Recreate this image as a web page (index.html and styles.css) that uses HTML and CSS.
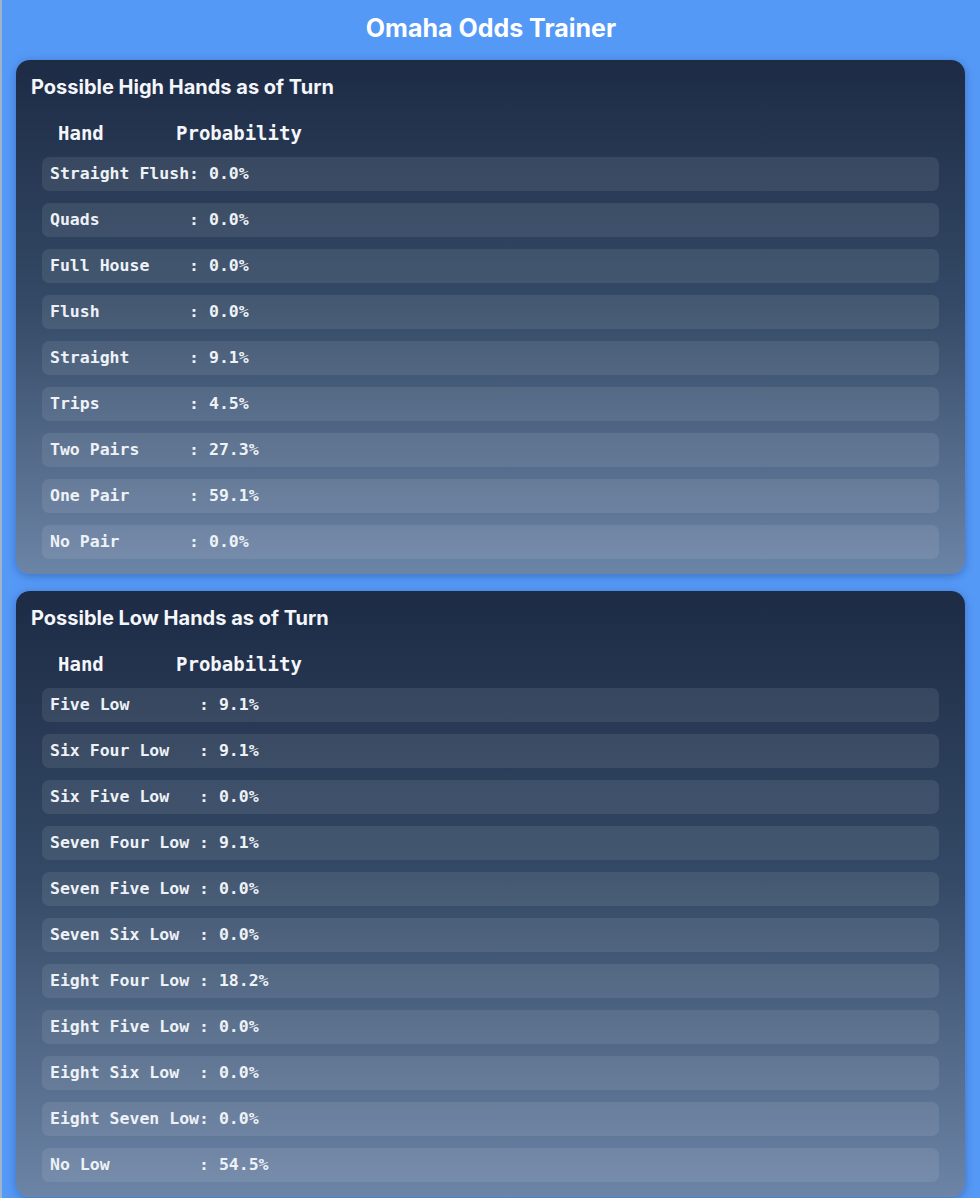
FILE: index.html
```html
<!DOCTYPE html>
<html>
<head>
<meta charset="utf-8">
<link rel="stylesheet" href="styles.css">
</head>
<body>
<h1 class="app-title">Omaha Odds Trainer</h1>

<section class="card">
  <h2 class="card-title">Possible High Hands as of Turn</h2>
  <div class="list">
    <div class="list-head"><span class="col-hand">Hand</span><span class="col-prob">Probability</span></div>
    <div class="row">Straight Flush: 0.0%</div>
    <div class="row">Quads         : 0.0%</div>
    <div class="row">Full House    : 0.0%</div>
    <div class="row">Flush         : 0.0%</div>
    <div class="row">Straight      : 9.1%</div>
    <div class="row">Trips         : 4.5%</div>
    <div class="row">Two Pairs     : 27.3%</div>
    <div class="row">One Pair      : 59.1%</div>
    <div class="row">No Pair       : 0.0%</div>
  </div>
</section>

<section class="card">
  <h2 class="card-title">Possible Low Hands as of Turn</h2>
  <div class="list">
    <div class="list-head"><span class="col-hand">Hand</span><span class="col-prob">Probability</span></div>
    <div class="row">Five Low       : 9.1%</div>
    <div class="row">Six Four Low   : 9.1%</div>
    <div class="row">Six Five Low   : 0.0%</div>
    <div class="row">Seven Four Low : 9.1%</div>
    <div class="row">Seven Five Low : 0.0%</div>
    <div class="row">Seven Six Low  : 0.0%</div>
    <div class="row">Eight Four Low : 18.2%</div>
    <div class="row">Eight Five Low : 0.0%</div>
    <div class="row">Eight Six Low  : 0.0%</div>
    <div class="row">Eight Seven Low: 0.0%</div>
    <div class="row">No Low         : 54.5%</div>
  </div>
</section>
</body>
</html>
```

FILE: styles.css
```css
html, body {
  margin: 0;
  padding: 0;
}
body {
  background: #5599f7;
  font-family: Inter, "Noto Sans", sans-serif;
  color: #ffffff;
  width: 980px;
  min-height: 1198px;
  box-sizing: border-box;
  border-left: 2px solid #9fb3cc;
  overflow: hidden;
}
.app-title {
  margin: 0;
  height: 56px;
  line-height: 56px;
  text-align: center;
  font-size: 25px;
  font-weight: 700;
  color: #ffffff;
  margin-bottom: 4px;
}
.card {
  margin: 0 15px 17px 14px;
  padding: 15px 26px 15px 15px;
  border-radius: 14px;
  background: linear-gradient(to bottom, #1d2b45 0%, #344a66 48%, #6c84a6 100%);
  box-shadow: 0 2px 10px rgba(20, 40, 90, 0.35);
}
.card-title {
  margin: 0;
  font-size: 20px;
  line-height: 24px;
  font-weight: 700;
  color: #f4f6fa;
}
.list {
  margin-left: 11px;
  display: flex;
  flex-direction: column;
  gap: 12px;
}
.list-head {
  margin-top: 22px;
  display: flex;
  padding-left: 16px;
  font-family: "DejaVu Sans Mono", monospace;
  font-weight: 700;
  font-size: 19px;
  line-height: 24px;
  color: #f4f6fa;
}
.col-hand {
  width: 118px;
}
.row {
  height: 34px;
  line-height: 34px;
  padding: 0 8px;
  border-radius: 7px;
  background: rgba(255, 255, 255, 0.085);
  font-family: "DejaVu Sans Mono", monospace;
  font-weight: 700;
  font-size: 16.5px;
  white-space: pre;
  color: #eef2f7;
}
```
